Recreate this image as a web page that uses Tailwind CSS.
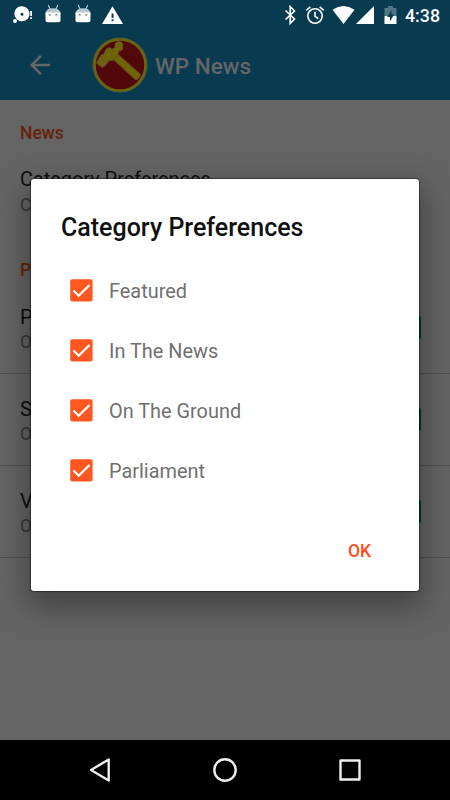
<!DOCTYPE html>
<html lang="en">
<head>
<meta charset="utf-8">
<title>WP News</title>
<script src="https://cdn.jsdelivr.net/npm/@tailwindcss/browser@4"></script>
</head>
<body class="w-[450px] h-[800px] overflow-hidden font-['Roboto',sans-serif]">
<div class="relative flex flex-col w-[450px] h-[800px] bg-[#646464]">
  <header class="h-[100px] bg-[#083b50] flex flex-col">
    <!-- status bar -->
    <div class="h-[30px] flex items-center pl-[12px] pr-[10px]">
      <svg class="w-[21px] h-[20px]" viewBox="0 0 21 20" fill="#fff"><path fill-rule="evenodd" d="M10 1.200a7.500 7.500 0 1 1-3.300 14.200Q5 15 4 13.300A7.500 7.500 0 0 1 10 1.200ZM10 7.700a1.500 1.500 0 1 0 0 3a1.500 1.500 0 0 0 0-3Z"/><circle cx="3" cy="16" r="2"/><path d="M18.200 6h1.800v5h-1.800zM18.200 12.300h1.800v1.700h-1.800z"/></svg>
      <svg class="w-[18px] h-[20px] ml-[11px]" viewBox="0 0 18 20"><path d="M4.300 0l1.700 4.200M13.700 0L12 4.200" stroke="#b7c8d0" stroke-width="1.100"/><path d="M1.500 9Q1.500 3.200 9 3.200T16.500 9z" fill="#bac9d0"/><path d="M1.500 7.500h15v7.200q0 2.500-2.500 2.500H4q-2.500 0-2.500-2.500z" fill="#fff"/><path d="M4.700 9.200h2v1.400h-2zM11.300 9.200h2v1.400h-2z" fill="#516b7c"/></svg>
      <svg class="w-[18px] h-[20px] ml-[12px]" viewBox="0 0 18 20"><path d="M4.300 0l1.700 4.200M13.700 0L12 4.200" stroke="#b7c8d0" stroke-width="1.100"/><path d="M1.500 9Q1.500 3.200 9 3.200T16.500 9z" fill="#bac9d0"/><path d="M1.500 7.500h15v7.200q0 2.500-2.500 2.500H4q-2.500 0-2.500-2.500z" fill="#fff"/><path d="M4.700 9.200h2v1.400h-2zM11.300 9.200h2v1.400h-2z" fill="#516b7c"/></svg>
      <svg class="w-[22px] h-[20px] ml-[9px]" viewBox="0 0 22 20"><path d="M11.500 1.200L22 19H1z" fill="#fff"/><path d="M10.600 8.500h1.900v4.500h-1.900zM10.600 14.300h1.900v1.900h-1.900z" fill="#083b50"/></svg>
      <div class="flex-1"></div>
      <svg class="w-[14px] h-[20px]" viewBox="0 0 14 20" fill="none" stroke="#fff" stroke-width="1.700"><path d="M2.500 5.500l9 8.500-4.300 4.300V1.700L11.500 6l-9 8.500"/></svg>
      <svg class="w-[20px] h-[20px] ml-[8px]" viewBox="0 0 20 20" fill="none" stroke="#fff" stroke-width="1.600"><circle cx="10" cy="11" r="7.200"/><path d="M1.300 5.300L5.300 1.800M18.700 5.300l-4-3.500M10 6.800v4.500l3.300 2.200"/></svg>
      <svg class="w-[23px] h-[20px] ml-[7px]" viewBox="0 0 23 20"><path d="M.5 4.800Q11.500-2.600 22.500 4.800L11.500 19z" fill="#fff"/></svg>
      <svg class="w-[18px] h-[20px] ml-[1px]" viewBox="0 0 18 20"><path d="M18 1v18H0z" fill="#fff"/></svg>
      <svg class="w-[13px] h-[20px] ml-[10px]" viewBox="0 0 13 20"><path d="M4 1h5v2h3.500v8H.5V3H4z" fill="#527585"/><path d="M.5 11h12v8H.5z" fill="#fff"/><path d="M7.500 5L3.300 12H6v4.500L10 9.500H7.500z" fill="#083b50"/></svg>
      <span class="ml-[8px] w-[35px] pt-px text-[17.800px] leading-[20px] font-medium text-white whitespace-nowrap">4:38</span>
    </div>
    <!-- toolbar -->
    <div class="h-[70px] flex items-center pl-[25px]">
      <svg class="w-[30px] h-[30px]" viewBox="0 0 24 24" fill="#666"><path d="M20 11H7.830l5.590-5.590L12 4l-8 8 8 8 1.410-1.410L7.830 13H20v-2z"/></svg>
      <svg class="w-[56px] h-[56px] ml-[37px]" viewBox="0 0 56 56">
        <circle cx="28" cy="28" r="27.500" fill="#575b36"/><circle cx="28" cy="28" r="26.500" fill="#6c6609"/><circle cx="28" cy="28" r="24.300" fill="#520708"/>
        <g stroke="#665641" stroke-width=".8" fill="#6e6502" stroke-linejoin="round">
          <path d="M22 23l4.500-5 21 18.500q1.500 1.500.3 3l-2 2.500q-1.500 1.200-3 0z"/>
          <path d="M13.200 14l1.800-2.800 3-.4 2 1.700 3-2q-.5-5.500 3.500-6 4.800.3 4 4.800 0 1.500 0 3-1.500 2-4 1.700l-.6 4.500-4.400 4.500-4.700.5-1.600 2.500-4.700 4.500-6.200-4.500 5-8 3.200-1.500z"/>
          <path d="M6.500 25.500l3.500-5 6.500 4.500M7 26.500l4-4.500M9.500 28.500l3.500-4.500M12 30l3.500-4.500" fill="none"/>
        </g>
      </svg>
      <h1 class="ml-[7px] pt-px text-[22.500px] leading-[30px] font-medium text-[#666] whitespace-nowrap">WP News</h1>
    </div>
  </header>
  <main class="flex-1 flex flex-col">
    <h2 class="h-[45px] pl-[20px] pt-[22px] text-[17.500px] leading-[22px] font-medium text-[#662209]">News</h2>
    <section class="h-[92px] pl-[20px] pt-[22px]"><p class="text-[19.900px] leading-[26px] text-[#0d0d0d]">Category Preferences</p><p class="text-[17.500px] leading-[24px] text-[#363636]">Choose</p></section>
    <h2 class="h-[45px] pl-[20px] pt-[22px] text-[17.500px] leading-[22px] font-medium text-[#662209]">Push</h2>
    <section class="h-[92px] flex justify-between border-b border-[#505050] pl-[20px] pr-[29px] pt-[22px]"><div><p class="text-[20px] leading-[26px] text-[#0d0d0d]">Push</p><p class="text-[17.500px] leading-[24px] text-[#363636]">On</p></div><i class="block w-[22px] h-[23px] mt-[12px] rounded-[2px] bg-[#003c35]"></i></section>
    <section class="h-[92px] flex justify-between border-b border-[#505050] pl-[20px] pr-[29px] pt-[22px]"><div><p class="text-[20px] leading-[26px] text-[#0d0d0d]">Sound</p><p class="text-[17.500px] leading-[24px] text-[#363636]">On</p></div><i class="block w-[22px] h-[23px] mt-[12px] rounded-[2px] bg-[#003c35]"></i></section>
    <section class="h-[92px] flex justify-between border-b border-[#505050] pl-[20px] pr-[29px] pt-[22px]"><div><p class="text-[20px] leading-[26px] text-[#0d0d0d]">Vibrate</p><p class="text-[17.500px] leading-[24px] text-[#363636]">On</p></div><i class="block w-[22px] h-[23px] mt-[12px] rounded-[2px] bg-[#003c35]"></i></section>
  </main>
  <nav class="h-[60px] bg-black flex items-center justify-between px-[85px]">
    <svg class="w-[30px] h-[30px]" viewBox="0 0 30 30" fill="none" stroke="#eee" stroke-width="2.400" stroke-linejoin="round"><path d="M23.700 4.500v21L6 15z"/></svg>
    <svg class="w-[30px] h-[30px]" viewBox="0 0 30 30" fill="none" stroke="#eee" stroke-width="2.400"><circle cx="15" cy="15" r="10.700"/></svg>
    <svg class="w-[30px] h-[30px]" viewBox="0 0 30 30" fill="none" stroke="#eee" stroke-width="2.400" stroke-linejoin="round"><path d="M5.500 5.500h19v19h-19z"/></svg>
  </nav>

  <!-- dialog -->
  <div role="dialog" class="absolute left-[31px] top-[179px] w-[388px] h-[411.500px] rounded-[3px] bg-white shadow-[0_0_1px_1px_rgba(0,0,0,0.4),0_12px_30px_4px_rgba(0,0,0,0.35)] flex flex-col">
    <h2 class="pl-[30px] pt-[33px] h-[82px] text-[25px] leading-[32px] font-medium text-[#101010] whitespace-nowrap">Category Preferences</h2>
    <label class="h-[60px] flex items-center pl-[39px] pt-[2px] text-[19.900px] text-[#707070]"><svg class="w-[23px] h-[23px] mr-[16px] mb-[4px]" viewBox="0 0 23 23"><rect x=".2" y=".2" width="22.400" height="22.400" rx="2" fill="#ff5722"/><path d="M3.500 11.500l5.200 5.200L19.500 6" fill="none" stroke="#fff" stroke-width="2.300"/></svg>Featured</label>
    <label class="h-[60px] flex items-center pl-[39px] pt-[2px] text-[19.900px] text-[#707070]"><svg class="w-[23px] h-[23px] mr-[16px] mb-[4px]" viewBox="0 0 23 23"><rect x=".2" y=".2" width="22.400" height="22.400" rx="2" fill="#ff5722"/><path d="M3.500 11.500l5.200 5.200L19.500 6" fill="none" stroke="#fff" stroke-width="2.300"/></svg>In The News</label>
    <label class="h-[60px] flex items-center pl-[39px] pt-[2px] text-[19.900px] text-[#707070]"><svg class="w-[23px] h-[23px] mr-[16px] mb-[4px]" viewBox="0 0 23 23"><rect x=".2" y=".2" width="22.400" height="22.400" rx="2" fill="#ff5722"/><path d="M3.500 11.500l5.200 5.200L19.500 6" fill="none" stroke="#fff" stroke-width="2.300"/></svg>On The Ground</label>
    <label class="h-[60px] flex items-center pl-[39px] pt-[2px] text-[19.900px] text-[#707070]"><svg class="w-[23px] h-[23px] mr-[16px] mb-[4px]" viewBox="0 0 23 23"><rect x=".2" y=".2" width="22.400" height="22.400" rx="2" fill="#ff5722"/><path d="M3.500 11.500l5.200 5.200L19.500 6" fill="none" stroke="#fff" stroke-width="2.300"/></svg>Parliament</label>
    <div class="flex justify-end pr-[48px] pt-[40px]"><button class="h-[20px] text-[17.500px] leading-[20px] font-medium text-[#ff4a1c]">OK</button></div>
  </div>
</div>
</body>
</html>
